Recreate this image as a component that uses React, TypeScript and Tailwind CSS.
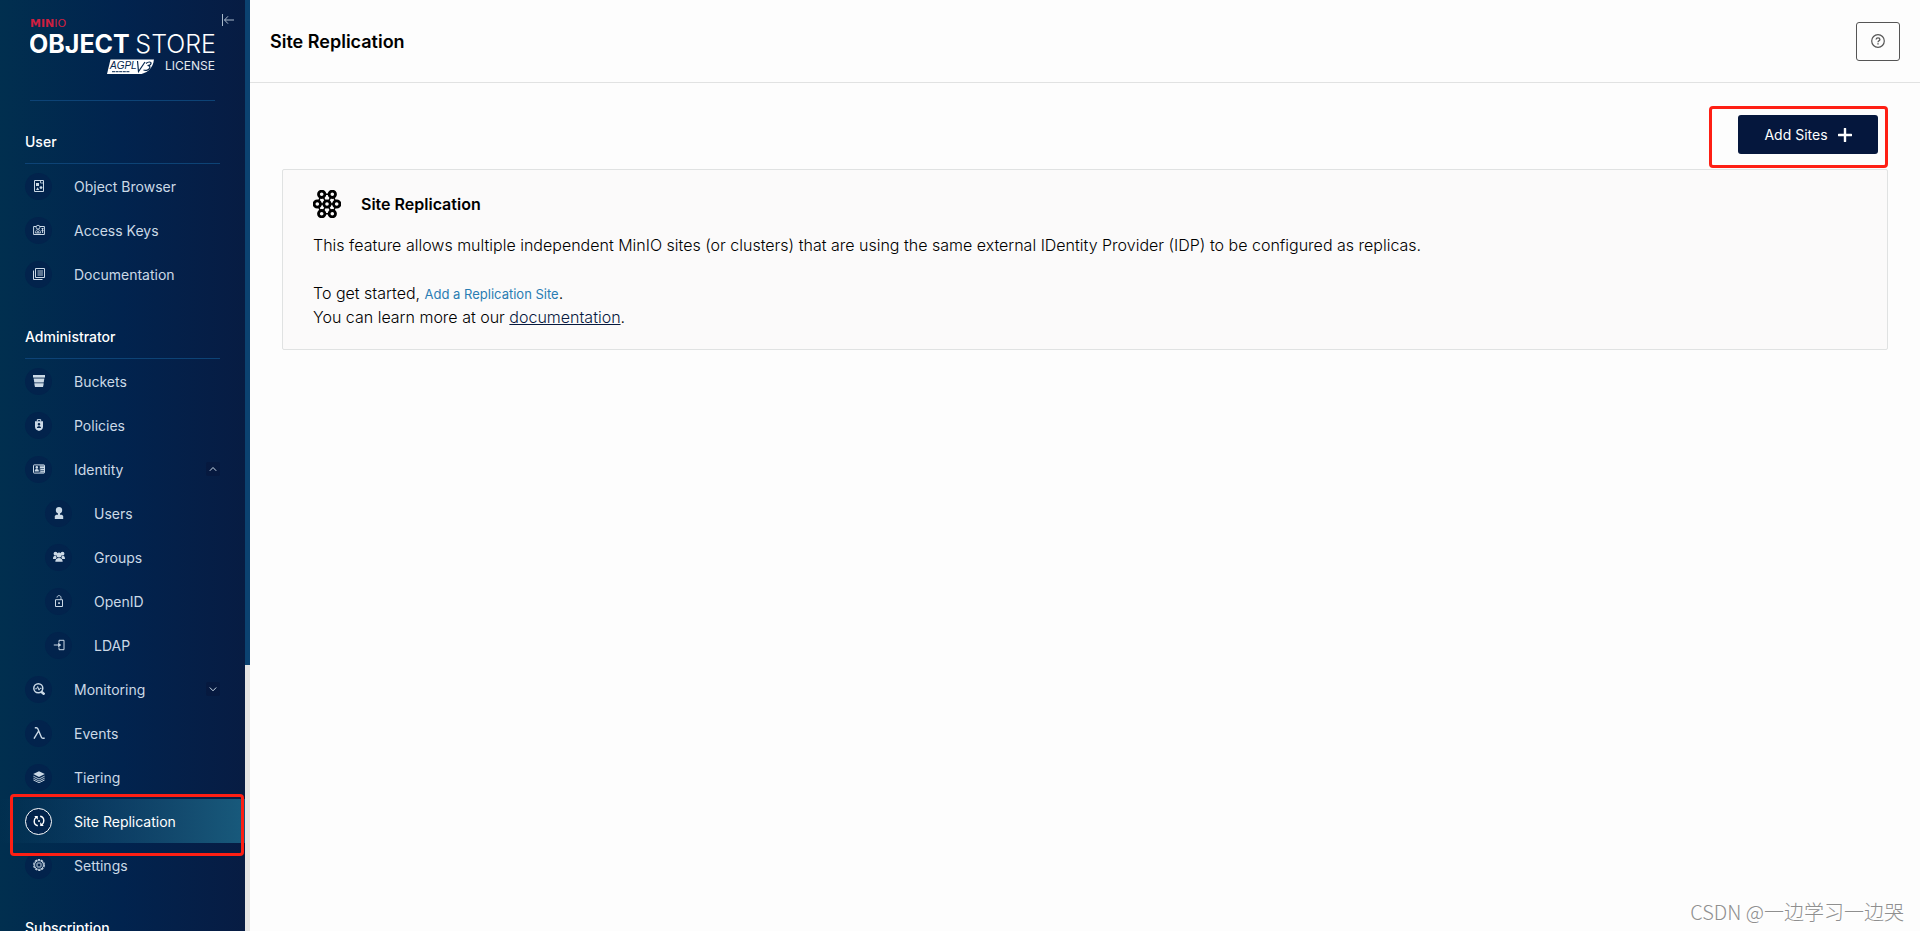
import type { ReactNode } from 'react';

type IconName =
  | 'object'
  | 'keys'
  | 'docs'
  | 'bucket'
  | 'policy'
  | 'identity'
  | 'user'
  | 'groups'
  | 'lock'
  | 'login'
  | 'monitor'
  | 'lambda'
  | 'layers'
  | 'replication'
  | 'settings';

interface NavItem {
  label: string;
  icon: IconName;
  nested?: boolean;
  active?: boolean;
  toggle?: 'open' | 'closed';
}

interface NavSection {
  title: string;
  items: NavItem[];
}

const sections: NavSection[] = [
  {
    title: 'User',
    items: [
      { label: 'Object Browser', icon: 'object' },
      { label: 'Access Keys', icon: 'keys' },
      { label: 'Documentation', icon: 'docs' },
    ],
  },
  {
    title: 'Administrator',
    items: [
      { label: 'Buckets', icon: 'bucket' },
      { label: 'Policies', icon: 'policy' },
      { label: 'Identity', icon: 'identity', toggle: 'open' },
      { label: 'Users', icon: 'user', nested: true },
      { label: 'Groups', icon: 'groups', nested: true },
      { label: 'OpenID', icon: 'lock', nested: true },
      { label: 'LDAP', icon: 'login', nested: true },
      { label: 'Monitoring', icon: 'monitor', toggle: 'closed' },
      { label: 'Events', icon: 'lambda' },
      { label: 'Tiering', icon: 'layers' },
      { label: 'Site Replication', icon: 'replication', active: true },
      { label: 'Settings', icon: 'settings' },
    ],
  },
  { title: 'Subscription', items: [] },
];

// All glyphs are drawn on a 12x12 grid
const glyphs: Record<IconName, ReactNode> = {
  object: (
    <>
      <path d="M1.5.5h9v11h-9z" fill="none" stroke="currentColor" />
      <path d="M7.5.5v2.500h3" fill="none" stroke="currentColor" strokeWidth=".8" />
      <path d="M3 3h3v3H3zM3 10l1.6-2.8L6.2 10z" fill="currentColor" />
      <circle cx="8" cy="7.6" r="1.4" fill="currentColor" />
    </>
  ),
  keys: (
    <>
      <path d="M3 2.5H.6v8h10.8v-8H7" fill="none" stroke="currentColor" />
      <circle cx="5" cy="3.2" r="1.9" fill="none" stroke="currentColor" strokeWidth=".9" />
      <path d="M2.5 9c0-2.4 1-3.3 2.5-3.3S7.5 6.6 7.5 9zM4 9l1-2 1 2" fill="none" stroke="currentColor" strokeWidth=".8" />
      <path d="M8.5 4.5h2M8.5 6.5h2M9.5 4v5" stroke="currentColor" strokeWidth=".9" />
    </>
  ),
  docs: (
    <>
      <path d="M2.5.5h9v9h-9zM.5 2.5v9h9" fill="none" stroke="currentColor" />
      <path d="M4.500 3h5.500M4.500 5h5.500M4.500 7h5.500" stroke="currentColor" strokeWidth=".9" />
    </>
  ),
  bucket: (
    <>
      <path d="M0 0h12v2.6H0zM.8 4h10.400L10.700 7H1.300zM1.400 8.400h9.200L10 12H2z" fill="currentColor" />
      <path d="M.5 2.600h11l-1.500 9.400H2z" fill="currentColor" opacity=".5" />
    </>
  ),
  policy: (
    <>
      <path d="M4.300 2.500V.6h3.400v1.900" fill="none" stroke="currentColor" />
      <path
        d="M2 2.300h8v5.500C10 10 8.500 11.300 6 12 3.500 11.300 2 10 2 7.800zM6 4a1.300 1.300 0 1 0 0 2.600A1.300 1.300 0 0 0 6 4zM3.900 9h4.200C8 7.700 7.200 7.200 6 7.200S4 7.700 3.900 9z"
        fill="currentColor"
        fillRule="evenodd"
      />
    </>
  ),
  identity: (
    <>
      <rect x=".5" y="1.900" width="11" height="8.200" rx=".6" fill="none" stroke="currentColor" />
      <path d="M6.600 2h5v8h-5z" fill="currentColor" opacity=".45" />
      <circle cx="3.800" cy="4.400" r="1.300" fill="currentColor" />
      <path d="M1.700 8.400c0-1.600.8-2.300 2.100-2.300s2.100.7 2.100 2.300zM7 3.500h4v1.600H7zM7.500 6h3.500v1H7.500zM7.500 8h3.500v.8H7.500z" fill="currentColor" />
    </>
  ),
  user: (
    <>
      <path d="M6 0c2 0 3.200 1.300 3.200 3.100 0 2-.9 3.600-3.200 3.600S2.800 5.100 2.800 3.100C2.800 1.300 4 0 6 0z" fill="currentColor" />
      <path d="M5 6h2v2H5z" fill="currentColor" />
      <path d="M1.800 12V9.600C1.800 8.300 3 7.700 4.300 7.700h3.400c1.300 0 2.500.6 2.500 1.900V12z" fill="currentColor" />
    </>
  ),
  groups: (
    <>
      <circle cx="2.500" cy="2.700" r="1.900" fill="currentColor" />
      <circle cx="9.500" cy="2.700" r="1.900" fill="currentColor" />
      <circle cx="6" cy="4" r="2.500" fill="currentColor" />
      <path d="M0 8c0-2.400.8-3.300 2.400-3.300L3.700 6 2.800 8zM12 8c0-2.400-.8-3.300-2.400-3.300L8.300 6l.9 2zM2.300 10.800c0-2.700 1.300-3.900 3.700-3.900s3.700 1.200 3.700 3.900z" fill="currentColor" />
    </>
  ),
  lock: (
    <>
      <path d="M2.500 4.700h7v6.800h-7z" fill="none" stroke="currentColor" />
      <path d="M4 2.600C4.100 1.300 4.800.6 6 .6s2 .8 2 2v2" fill="none" stroke="currentColor" strokeWidth=".9" />
      <path d="M5.200 7.200h1.700v1.700H5.200z" fill="currentColor" />
    </>
  ),
  login: (
    <>
      <path d="M6 3.500V1.300h5v9.400H6V8.500" fill="none" stroke="currentColor" />
      <path d="M.8 6H7" stroke="currentColor" />
      <path d="M5.200 3.500L8.200 6l-3 2.500z" fill="currentColor" />
    </>
  ),
  monitor: (
    <>
      <circle cx="5.300" cy="5.300" r="4.500" fill="none" stroke="currentColor" strokeWidth="1.500" />
      <path d="M8 8.500l3.500 3" stroke="currentColor" strokeWidth="2.400" />
      <path d="M2.200 5.800h1.500l1-2.300 1.300 3.700 1-1.900h1.500" fill="none" stroke="currentColor" strokeWidth="1" />
    </>
  ),
  lambda: (
    <path d="M1.800.7h1.700c.7 0 1 .4 1.300 1.100l3.600 8.400c.3.700.8 1 1.500 1h1.800M5.600 4L1 11.700" fill="none" stroke="currentColor" strokeWidth="1.400" />
  ),
  layers: (
    <>
      <path d="M6 .2L11.800 3 6 5.900.2 3z" fill="currentColor" />
      <path d="M.4 5.200L6 8l5.600-2.800M.4 7.200L6 10l5.600-2.800M.4 9L6 11.700 11.600 9" fill="none" stroke="currentColor" strokeWidth=".9" />
    </>
  ),
  replication: (
    <>
      <path d="M4.800 10.700C2.700 10.300 1.200 8.500 1.200 6.200c0-1.600.7-3 1.900-3.900M7.200 1.300c2.100.4 3.600 2.200 3.600 4.500 0 1.600-.7 3-1.900 3.900" fill="none" stroke="currentColor" strokeWidth="1.400" />
      <path d="M1.200 1.100h3.600v3.600zM10.800 10.900H7.200V7.300z" fill="currentColor" />
      <circle cx="6" cy="6" r="1" fill="currentColor" />
    </>
  ),
  settings: (
    <>
      <circle cx="6" cy="6" r="5.300" fill="none" stroke="currentColor" strokeWidth="1.200" strokeDasharray="2.400 .9" />
      <circle cx="6" cy="6" r="4.400" fill="none" stroke="currentColor" strokeWidth=".9" />
      <rect x="4" y="4" width="4" height="4" rx=".5" fill="none" stroke="currentColor" />
    </>
  ),
};

const rings = [
  [8.7, 4.3],
  [19.3, 4.3],
  [4.3, 14],
  [14, 14],
  [23.7, 14],
  [8.7, 23.7],
  [19.3, 23.7],
];

function ReplicationIcon() {
  return (
    <svg viewBox="0 0 28 28" className="size-7 shrink-0" fill="none" stroke="#000" aria-hidden="true">
      <path d="M8.700 4.300h10.600L23.700 14l-4.400 9.700H8.700L4.300 14zM4.300 14h19.400M8.700 4.300l10.600 19.400M19.300 4.300L8.700 23.700" strokeWidth="1.500" />
      {rings.map(([cx, cy]) => (
        <circle key={`${cx}-${cy}`} cx={cx} cy={cy} r="3.200" strokeWidth="2.800" fill="#fbfafa" />
      ))}
    </svg>
  );
}

function Logo() {
  return (
    <svg viewBox="0 0 185 60" className="h-[60px] w-[185px]" role="img" aria-label="MinIO Object Store, AGPL v3 license">
      <text x="0" y="12" fill="#cf1f40" fontFamily="DejaVu Sans, sans-serif" fontSize="11" fontWeight="700">
        MIN<tspan fontWeight="400">IO</tspan>
      </text>
      <g fill="#fff" fontFamily="Inter, sans-serif">
        <text x="-1" y="38" fontSize="25" fontWeight="700">
          OBJECT
        </text>
        <text x="186" y="38" fontSize="25" fontWeight="300" textAnchor="end">
          STORE
        </text>
        <text x="185" y="55" fontSize="12" fontWeight="400" textAnchor="end" fill="#e3e9ef">
          LICENSE
        </text>
      </g>
      <path d="M80.500 44.500H124c-1 7.500-5 12.500-12.500 14.500H77z" fill="#fff" />
      <text x="80" y="54" fontSize="10" fontStyle="italic" fontFamily="Liberation Sans, sans-serif" fill="#06284f">
        AGPL
      </text>
      <path d="M82 56.700h18" stroke="#06284f" strokeWidth="1" strokeDasharray="3 .6" />
      <path d="M107.500 46l1 10.500L115 47M116 48.500c2-2 5.500-2 5 0-.4 1.600-2.500 2-3.500 2 1.800 0 2.800.9 2.200 2.500-.7 2-3.700 3-6.200 2" fill="none" stroke="#06284f" strokeWidth="1.200" />
    </svg>
  );
}

function NavRow({ item }: { item: NavItem }) {
  return (
    <li className="relative">
      <a
        href="#"
        className={`flex h-11 items-center gap-[22px] pr-[25px] text-sm ${item.nested ? 'pl-[45px]' : 'pl-[25px]'} ${
          item.active ? 'bg-linear-to-r from-transparent to-[#185a7c] text-white' : 'text-[#cbd9e6]'
        }`}
      >
        <span
          className={`flex size-[27px] shrink-0 items-center justify-center rounded-full bg-[#02234c] ${
            item.active ? 'border border-white' : ''
          }`}
        >
          <svg viewBox="0 0 12 12" className="size-3" aria-hidden="true">
            {glyphs[item.icon]}
          </svg>
        </span>
        <span className="flex-1 pt-0.5">{item.label}</span>
        {item.toggle && (
          <span className="flex size-[14px] items-center justify-center rounded-xs bg-[#06193f]">
            <svg viewBox="0 0 8 8" className="size-2" fill="none" stroke="currentColor" aria-hidden="true">
              <path d={item.toggle === 'open' ? 'M.8 5.8L4 2.5l3.2 3.3' : 'M.8 2.5L4 5.8l3.2-3.3'} />
            </svg>
          </span>
        )}
      </a>
      {item.active && (
        <span className="pointer-events-none absolute -top-[5px] right-px -bottom-[13px] left-[10px] z-10 rounded-sm border-3 border-[#fe1f14]" />
      )}
    </li>
  );
}

function Sidebar() {
  return (
    <aside className="flex h-screen w-[250px] shrink-0 overflow-hidden">
      <div className="relative flex-1 bg-linear-to-r from-[#012f4f] via-[#01234e] to-[#071c43]">
        <div className="mx-[30px] border-b border-[#0d4376] pt-[15px] pb-[25px]">
          <Logo />
        </div>
        <button type="button" aria-label="Collapse menu" className="absolute top-[14px] right-[11px] text-[#a9b9ca]">
          <svg viewBox="0 0 12 12" className="size-3" fill="none" stroke="currentColor" aria-hidden="true">
            <path d="M.5 0v12M2.500 6H12M6 2.300L2.500 6 6 9.700" />
          </svg>
        </button>
        <nav>
          {sections.map((section) => (
            <section key={section.title}>
              <h2 className="mx-[25px] flex h-[63px] items-end border-b border-[#0d4376] pb-[9px] text-sm leading-6 font-medium text-white">
                {section.title}
              </h2>
              <ul>
                {section.items.map((item) => (
                  <NavRow key={item.label} item={item} />
                ))}
              </ul>
            </section>
          ))}
        </nav>
      </div>
      <div className="w-[5px] bg-[#e4e4e4]">
        <div className="h-5/7 bg-[#0b4271]" />
      </div>
    </aside>
  );
}

export default function App() {
  return (
    <div className="flex h-screen overflow-hidden bg-[#fdfdfd] font-['Inter',sans-serif] text-black">
      <Sidebar />
      <div className="relative min-w-0 flex-1">
        <header className="flex h-[83px] items-center justify-between border-b border-[#e1e2e2] px-5">
          <h1 className="pt-0.5 text-lg font-semibold">Site Replication</h1>
          <button
            type="button"
            aria-label="Help"
            className="flex h-[39px] w-11 items-center justify-center rounded-[3px] border border-[#555] text-[#555]"
          >
            <svg viewBox="0 0 14 14" className="size-[14px]" fill="none" stroke="currentColor" aria-hidden="true">
              <circle cx="7" cy="7" r="6.300" strokeWidth="1.200" />
              <path d="M5.100 5.500C5.200 4.300 6 3.800 7 3.800s1.900.6 1.900 1.600C8.900 6.700 7 6.800 7 8.300" strokeWidth="1.300" />
              <path d="M7 9.300v1.300" strokeWidth="1.400" />
            </svg>
          </button>
        </header>
        <main className="px-8 pt-8">
          <div className="flex justify-end pr-[10px]">
            <div className="relative">
              <button
                type="button"
                className="flex h-[39px] w-[140px] items-center justify-center gap-[10px] rounded-[3px] bg-[#05173d] text-sm text-white"
              >
                Add Sites
                <svg viewBox="0 0 14 14" className="size-[14px]" fill="none" stroke="currentColor" aria-hidden="true">
                  <path d="M7 .8v12.400M.8 7h12.400" strokeWidth="2.400" strokeLinecap="round" />
                </svg>
              </button>
              <span className="pointer-events-none absolute -top-[9px] -right-[10px] -bottom-[14px] -left-[29px] rounded-sm border-3 border-[#fe1f14]" />
            </div>
          </div>
          <section className="mt-[15px] rounded-xs border border-[#e0e2e2] bg-[#fbfafa] px-[30px] py-5">
            <div className="flex items-center gap-5">
              <ReplicationIcon />
              <h2 className="text-base font-semibold">Site Replication</h2>
            </div>
            <p className="mt-[15px] text-base font-light">
              This feature allows multiple independent MinIO sites (or clusters) that are using the same external IDentity
              Provider (IDP) to be configured as replicas.
            </p>
            <p className="mt-6 text-base font-light">
              To get started,{' '}
              <a href="#" className="text-[13px] font-normal text-[#2a7db3]">
                Add a Replication Site
              </a>
              .
              <br />
              You can learn more at our{' '}
              <a href="#" className="text-[#07193e] underline">
                documentation
              </a>
              .
            </p>
          </section>
        </main>
        <div className="pointer-events-none absolute right-4 bottom-[5px] font-['Noto_Sans_CJK_SC',sans-serif] text-xl leading-7 font-light text-[#8f8f8f] [text-shadow:1px_1px_0_#fff]">
          CSDN @一边学习一边哭
        </div>
      </div>
    </div>
  );
}
